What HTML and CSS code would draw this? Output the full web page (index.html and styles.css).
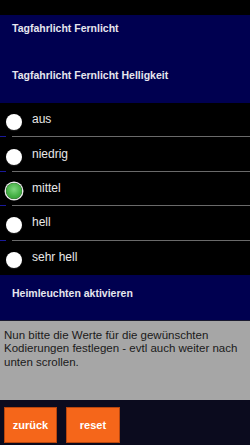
FILE: index.html
```html
<!DOCTYPE html>
<html>
<head>
<meta charset="utf-8">
<link rel="stylesheet" href="styles.css">
</head>
<body>
<div class="app">
  <div class="topbar"></div>
  <div class="navy head">
    <div class="title t1">Tagfahrlicht Fernlicht</div>
    <div class="title t2">Tagfahrlicht Fernlicht Helligkeit</div>
  </div>
  <ul class="options">
    <li class="opt"><span class="radio"></span><span class="label">aus</span></li>
    <li class="opt"><span class="radio"></span><span class="label">niedrig</span></li>
    <li class="opt"><span class="radio on"></span><span class="label">mittel</span></li>
    <li class="opt"><span class="radio"></span><span class="label">hell</span></li>
    <li class="opt last"><span class="radio"></span><span class="label">sehr hell</span></li>
  </ul>
  <div class="navy sub">
    <div class="title">Heimleuchten aktivieren</div>
  </div>
  <div class="info">Nun bitte die Werte für die gewünschten Kodierungen festlegen - evtl auch weiter nach unten scrollen.</div>
  <div class="footer">
    <button class="btn">zurück</button>
    <button class="btn">reset</button>
  </div>
</div>
</body>
</html>
```
FILE: styles.css
```css
* { box-sizing: border-box; }
html, body { margin: 0; padding: 0; background: #000; }
body { font-family: "Liberation Sans", Arial, sans-serif; width: 250px; height: 445px; overflow: hidden; }
.app { display: flex; flex-direction: column; height: 445px; }
.topbar { height: 15px; background: #000; }
.navy { background: #000050; }
.head { height: 88px; display: flex; flex-direction: column; }
.title { color: #e6e6ee; font-weight: bold; font-size: 10.5px; padding-left: 12px; }
.t1 { height: 26px; line-height: 26px; }
.t2 { margin-top: 21px; height: 26px; line-height: 26px; }
.options { list-style: none; margin: 0; padding: 0; }
.opt { position: relative; height: 34.4px; display: flex; align-items: center; }
.opt::after { content: ""; position: absolute; left: 12px; right: 0; bottom: 0; height: 1px; background: #6a6a6a; }
.opt::before { content: ""; position: absolute; left: 0; width: 6px; bottom: 0; height: 1px; background: #1a1a9a; }
.opt.last::after, .opt.last::before { display: none; }
.radio { width: 16px; height: 16px; border-radius: 50%; background: #fff; margin-left: 6px; margin-top: 4px; flex: none; box-shadow: 0 1px 1px rgba(40,40,40,0.8); }
.radio.on { background: radial-gradient(circle at 50% 40%, #7fd67f 0%, #45b045 55%, #2f8f2f 100%); box-shadow: 0 0 0 1.5px #e8e8e8; }
.label { color: #e8e8e8; font-size: 12px; margin-left: 10px; margin-top: -2px; }
.sub { height: 46px; display: flex; align-items: center; border-bottom: 1px solid #1a1a30; }
.sub .title { margin-top: -8px; }
.info { height: 79px; background: #a6a6a6; color: #1a1a1a; font-size: 11.5px; line-height: 13.5px; padding: 8px 4px; }
.footer { flex: 1; background: #0b0b1e; display: flex; gap: 9px; padding: 7px 4px 2px; }
.btn { font-family: inherit; width: 53px; height: 36px; background: #f5661a; border: 1px solid #b8460e; color: #fff; font-size: 11px; font-weight: bold; padding: 0; }
.btn + .btn { width: 54px; }
```
